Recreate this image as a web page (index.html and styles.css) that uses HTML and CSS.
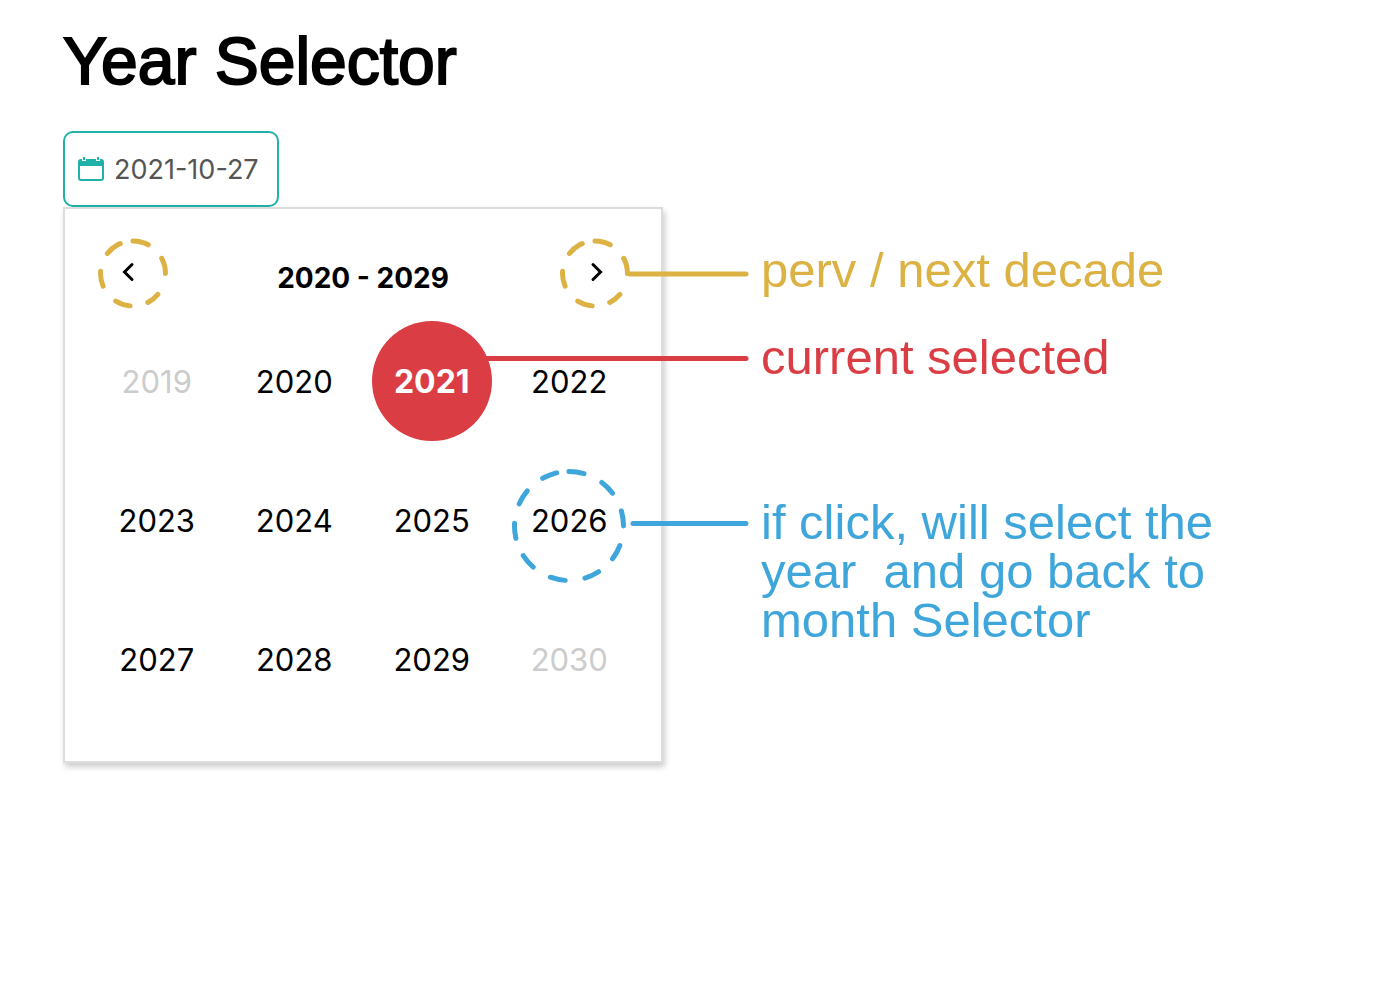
FILE: index.html
```html
<!DOCTYPE html>
<html lang="en">
<head>
<meta charset="utf-8">
<meta name="viewport" content="width=device-width, initial-scale=1">
<title>Year Selector</title>
<link rel="stylesheet" href="styles.css">
</head>
<body>
<main class="page">
  <h1 class="title">Year Selector</h1>

  <label class="date-field">
    <svg class="date-icon" viewBox="0 0 26 26" aria-hidden="true">
      <path fill="#20b2aa" fill-rule="evenodd" d="M3 3h2V1h2v2h12V1h2v2h2a3 3 0 0 1 3 3v16a3 3 0 0 1-3 3H3a3 3 0 0 1-3-3V6a3 3 0 0 1 3-3zM2 10v12q0 1 1 1h20q1 0 1-1V10z"/>
      <path fill="#fff" d="M4 3h1v1h2V3h1v2H4zM18 3h1v1h2V3h1v2h-4z"/>
    </svg>
    <input class="date-input" type="text" value="2021-10-27" aria-label="Date">
  </label>

  <div class="stage">
    <section class="picker" aria-label="Choose a year">
      <header class="picker-head">
        <button class="arrow" type="button" aria-label="Previous decade">
          <svg viewBox="0 0 18 18" aria-hidden="true"><path d="M13 1.500L5.500 9l7.500 7.500"/></svg>
        </button>
        <h2 class="decade">2020 - 2029</h2>
        <button class="arrow" type="button" aria-label="Next decade">
          <svg viewBox="0 0 18 18" aria-hidden="true"><path d="M4 1.500L11.500 9 4 16.500"/></svg>
        </button>
      </header>
      <div class="years">
        <button class="year outside" type="button">2019</button>
        <button class="year" type="button">2020</button>
        <button class="year selected" type="button" aria-pressed="true">2021</button>
        <button class="year" type="button">2022</button>
        <button class="year" type="button">2023</button>
        <button class="year" type="button">2024</button>
        <button class="year" type="button">2025</button>
        <button class="year" type="button">2026</button>
        <button class="year" type="button">2027</button>
        <button class="year" type="button">2028</button>
        <button class="year" type="button">2029</button>
        <button class="year outside" type="button">2030</button>
      </div>
    </section>

    <div class="notes">
      <p class="note gold">perv / next decade</p>
      <p class="note red">current selected</p>
      <p class="note blue">if click, will select the
year  and go back to
month Selector</p>
    </div>

    <svg class="callouts" viewBox="0 0 690 556" aria-hidden="true">
      <g class="gold">
        <circle class="ring-small" cx="70" cy="66.500" r="32.500" pathLength="360" transform="rotate(-28 70 66.500)"/>
        <circle class="ring-small" cx="532" cy="66.500" r="32.500" pathLength="360" transform="rotate(-28 532 66.500)"/>
        <path d="M567 67H683"/>
      </g>
      <path class="red" d="M424 151.500H683"/>
      <g class="blue">
        <circle class="ring-large" cx="506" cy="319" r="54.500" pathLength="360" transform="rotate(-16 506 319)"/>
        <path d="M570 316.500H683"/>
      </g>
    </svg>
  </div>
</main>
</body>
</html>
```
FILE: styles.css
```css
* {
  box-sizing: border-box;
}

body {
  margin: 0;
  background: #fff;
  color: #000;
  font-family: "Liberation Sans", Arial, sans-serif;
}

button,
input {
  margin: 0;
  padding: 0;
  border: 0;
  background: none;
  color: inherit;
  font-family: Inter, sans-serif;
}

button {
  cursor: pointer;
}

.gold { color: #dcb244; }
.red { color: #db3d44; }
.blue { color: #3ea6db; }

.page {
  padding: 24px 63px;
}

.title {
  margin: 0 0 32px;
  font-size: 66px;
  font-weight: 400;
  line-height: 75px;
  -webkit-text-stroke: 2px currentColor;
}

.date-field {
  display: flex;
  align-items: center;
  gap: 10px;
  width: 216px;
  height: 76px;
  padding: 0 13px;
  border: 2px solid #20b2aa;
  border-radius: 10px;
}

.date-icon {
  flex: none;
  width: 26px;
  height: 26px;
}

.date-input {
  flex: 1;
  min-width: 0;
  color: #555;
  font-size: 27px;
  outline: none;
}

.stage {
  position: relative;
  display: grid;
  grid-template-columns: 600px minmax(0, 1fr);
  column-gap: 98px;
}

.picker {
  padding: 0 23px 33px;
  border: 2px solid #ddd;
  box-shadow: 2px 4px 6px rgba(0, 0, 0, 0.2);
}

.picker-head {
  display: flex;
  align-items: center;
  justify-content: space-between;
  padding-top: 26px;
}

.arrow {
  width: 80px;
  height: 76px;
}

.arrow svg {
  width: 18px;
  height: 18px;
  fill: none;
  stroke: #000;
  stroke-width: 3;
  stroke-linecap: round;
  overflow: visible;
}

.decade {
  margin: 0;
  padding-top: 10px;
  font: 700 28px/34px Inter, sans-serif;
}

.years {
  display: grid;
  grid-template-columns: repeat(4, 1fr);
  grid-auto-rows: 139px;
  place-items: center;
}

.year {
  width: 120px;
  height: 120px;
  padding-top: 2px;
  border-radius: 50%;
  font-size: 31px;
}

.year.outside {
  color: #ccc;
}

.year.selected {
  background: #db3d44;
  color: #fff;
  font-size: 32px;
  font-weight: 700;
}

.notes {
  padding-top: 39px;
}

.note {
  margin: 0 0 38px;
  font-size: 49px;
  line-height: 49px;
  white-space: pre-wrap;
}

.note.blue {
  margin-top: 116px;
}

.callouts {
  position: absolute;
  top: 0;
  left: 0;
  width: 690px;
  height: 556px;
  fill: none;
  stroke: currentColor;
  stroke-width: 5;
  stroke-linecap: round;
  pointer-events: none;
}

.callouts .gold,
.callouts .red,
.callouts .blue {
  stroke: currentColor;
}

.ring-small {
  stroke-dasharray: 28 40 23 32 27 35 27 34 29 23 28 34;
}

.ring-large {
  stroke-dasharray: 16 21 16 20 16 21 16 21 16 20 16 21 16 21 16 13 16 21 16 21;
}
```
